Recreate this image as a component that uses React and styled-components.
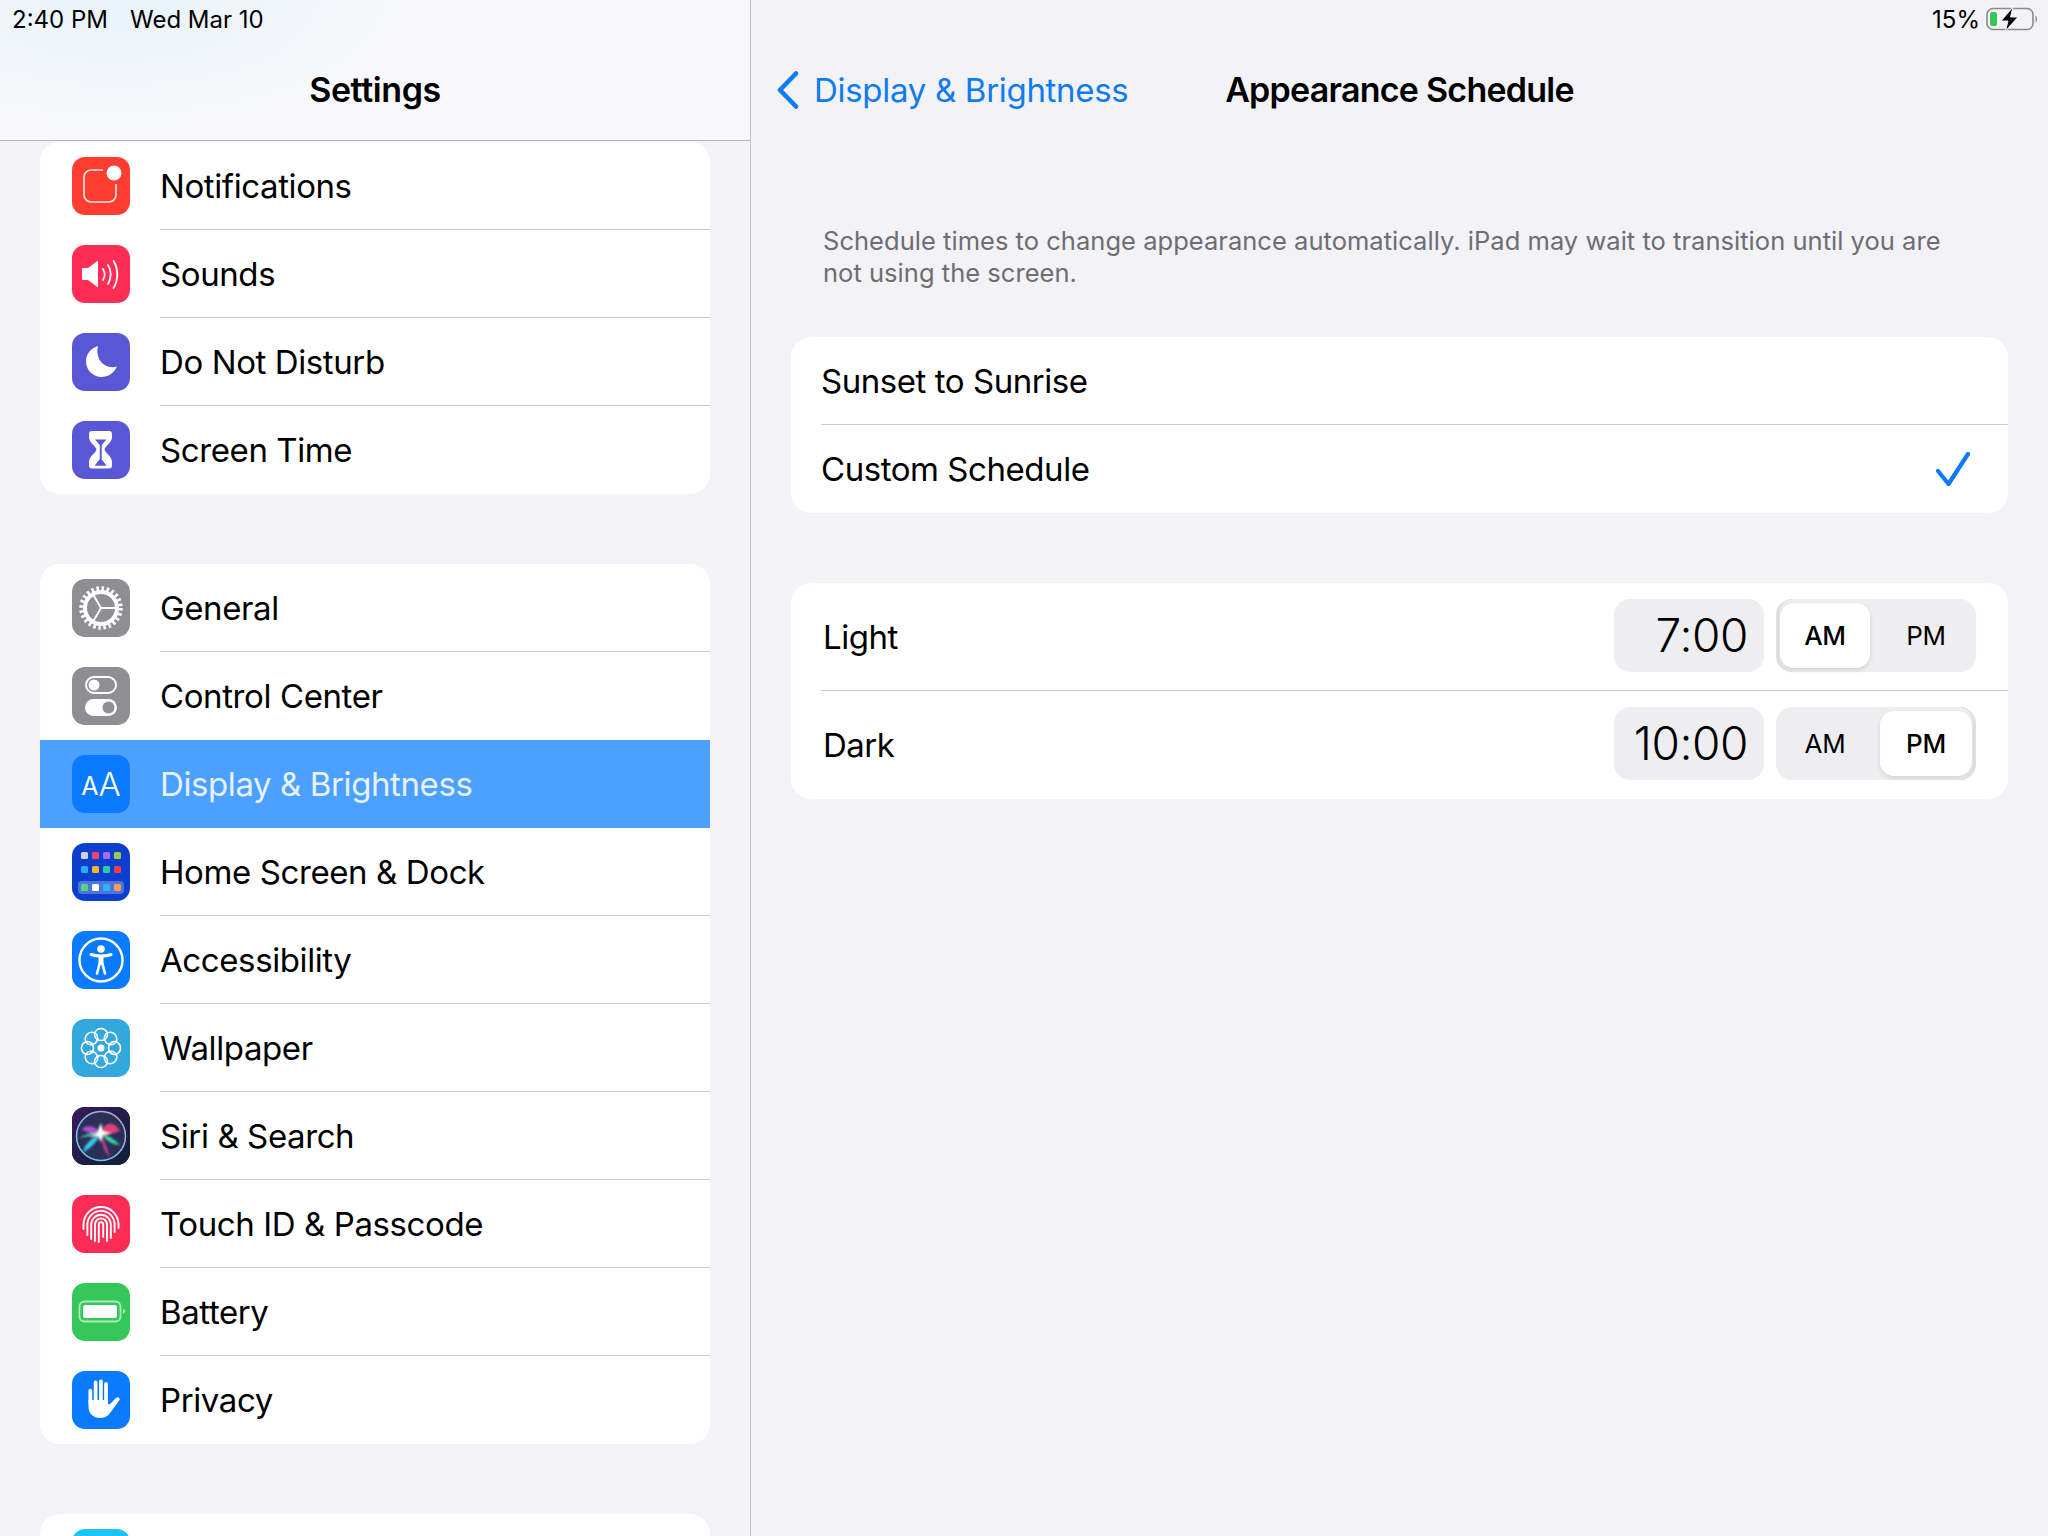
import React from 'react';
import styled, { createGlobalStyle } from 'styled-components';

const GlobalStyle = createGlobalStyle`
	html, body { margin: 0; padding: 0; }
	body {
		background: #f2f2f7;
		font-family: Inter, "Liberation Sans", sans-serif;
		color: #000;
	}
`;

const Root = styled.div`
	width: 2048px;
	height: 1536px;
	display: grid;
	grid-template-columns: 751px 1fr;
	overflow: hidden;
	background: #f2f2f7;
`;

const Sidebar = styled.aside`
	border-right: 1px solid #c5c5c9;
	height: 1536px;
	overflow: hidden;
`;

const SideHeader = styled.header`
	height: 140px;
	border-bottom: 1px solid #b4b4b8;
	background:
		radial-gradient(ellipse 300px 130px at 120px 0, #e9f3fb 0%, rgba(233, 243, 251, 0) 100%),
		#f8f8fa;
`;

const StatusBar = styled.div`
	height: 38px;
	display: flex;
	align-items: center;
	justify-content: ${(p) => (p.$right ? 'flex-end' : 'flex-start')};
	gap: ${(p) => (p.$right ? '6px' : '22px')};
	padding: ${(p) => (p.$right ? '0 8px 0 0' : '0 0 0 12px')};
	font-size: 24px;
`;

const SideTitle = styled.h1`
	margin: 32px 0 0;
	height: 40px;
	line-height: 40px;
	text-align: center;
	font-size: 34px;
	font-weight: 600;
	letter-spacing: -0.4px;
`;

const SideList = styled.div`
	padding: 1px 40px 0;
`;

const Card = styled.section`
	background: #fff;
	border-radius: 20px;
	overflow: hidden;
	margin-bottom: 70px;
`;

const Row = styled.div`
	height: 88px;
	display: flex;
	align-items: center;
	padding-left: 32px;
	background: ${(p) => (p.$selected ? '#4ca0ff' : '#fff')};
`;

const IconBox = styled.div`
	width: 58px;
	height: 58px;
	flex: none;
	border-radius: 13px;
	overflow: hidden;
	background: ${(p) => p.$bg};
	display: flex;
	align-items: center;
	justify-content: center;
	color: #fff;
	svg { display: block; }
`;

const RowBody = styled.div`
	flex: 1;
	height: 88px;
	margin-left: 30px;
	box-sizing: border-box;
	display: flex;
	align-items: center;
	border-bottom: 1px solid ${(p) => (p.$plain ? 'transparent' : '#c8c8cc')};
	font-size: 33px;
	letter-spacing: -0.4px;
	color: ${(p) => (p.$selected ? '#e6f2ff' : '#000')};
`;

const SmallA = styled.span`
	font-size: 25px;
	font-weight: 400;
	line-height: 1;
	margin-top: 4px;
`;

const BigA = styled.span`
	font-size: 33px;
	font-weight: 300;
	line-height: 1;
`;

const Detail = styled.main`
	height: 1536px;
	overflow: hidden;
`;

const DetailHeader = styled.header`
	height: 140px;
`;

const NavBar = styled.div`
	margin-top: 32px;
	height: 40px;
	display: grid;
	grid-template-columns: 1fr auto 1fr;
	align-items: center;
`;

const BackLink = styled.a`
	display: flex;
	align-items: center;
	gap: 14px;
	padding-left: 25px;
	color: #0f7bf0;
	font-size: 33px;
	letter-spacing: -0.3px;
	white-space: nowrap;
`;

const DetailTitle = styled.h2`
	margin: 0;
	font-size: 34px;
	line-height: 40px;
	font-weight: 600;
	letter-spacing: -0.75px;
`;

const DetailBody = styled.div`
	padding: 0 40px;
`;

const Note = styled.p`
	margin: 85px 0 48px;
	padding: 0 30px 0 32px;
	font-size: 25.5px;
	line-height: 32px;
	color: #6d6d72;
	letter-spacing: 0.03px;
`;

const OptionRow = styled.div`
	height: 88px;
	display: flex;
	align-items: center;
	justify-content: space-between;
	padding-left: 30px;
	font-size: 33px;
	letter-spacing: -0.45px;
`;

const OptionBody = styled.div`
	flex: 1;
	height: 88px;
	box-sizing: border-box;
	display: flex;
	align-items: center;
	justify-content: space-between;
	padding-right: 38px;
	border-bottom: 1px solid ${(p) => (p.$plain ? 'transparent' : '#c8c8cc')};
`;

const TimeRow = styled.div`
	height: 108px;
	box-sizing: border-box;
	margin-left: 30px;
	padding: 0 32px 3px 0;
	display: flex;
	align-items: center;
	gap: 12px;
	font-size: 33px;
	letter-spacing: -0.5px;
	border-bottom: 1px solid ${(p) => (p.$plain ? 'transparent' : '#c8c8cc')};
`;

const TimeLabel = styled.span`
	flex: 1;
	margin-top: 3px;
	padding-left: 2px;
`;

const TimeValue = styled.div`
	width: 150px;
	height: 73px;
	box-sizing: border-box;
	padding-right: 16px;
	border-radius: 16px;
	background: #eeeef0;
	font-size: 46px;
	letter-spacing: -0.4px;
	font-weight: 300;
	display: flex;
	align-items: center;
	justify-content: flex-end;
`;

const Segment = styled.div`
	width: 200px;
	height: 73px;
	box-sizing: border-box;
	padding: 4px;
	border-radius: 16px;
	background: #eeeef0;
	display: grid;
	grid-template-columns: 90px 92px;
	gap: 10px;
	box-shadow: inset ${(p) => (p.$pm ? '-3px' : '3px')} 0 0 #e2e2e4;
`;

const SegmentItem = styled.div`
	border-radius: 14px;
	display: flex;
	align-items: center;
	justify-content: center;
	font-size: 26px;
	letter-spacing: -0.3px;
	font-weight: ${(p) => (p.$active ? 450 : 400)};
	background: ${(p) => (p.$active ? '#fff' : 'transparent')};
	box-shadow: ${(p) => (p.$active ? '0 2px 5px rgba(0, 0, 0, 0.12)' : 'none')};
`;

const NotifIcon = () => (
	<svg width="58" height="58" viewBox="0 0 58 58" fill="none">
		<path d="M31 13H19a7 7 0 0 0-7 7v18a7 7 0 0 0 7 7h18a7 7 0 0 0 7-7V27" stroke="#fff" strokeOpacity="0.85" strokeWidth="1.7" />
		<circle cx="42" cy="16" r="7.5" fill="#fff" />
	</svg>
);

const SoundIcon = () => (
	<svg width="58" height="58" viewBox="0 0 58 58" fill="none">
		<path d="M10 23h6l10-7.5v27L16 35h-6z" fill="#fff" />
		<g stroke="#fff" strokeWidth="1.8" strokeLinecap="round">
			<path d="M31 24c2 3.2 2 7.8 0 11" />
			<path d="M36 20c3.6 5.4 3.6 13.2 0 19" />
			<path d="M41.5 16c5 7.5 5 19.5 0 27" />
		</g>
	</svg>
);

const MoonIcon = () => (
	<svg width="58" height="58" viewBox="0 0 58 58">
		<path d="M26 13C19 15 14 21 14 28.5 14 37 21 44 29.5 44 36 44 42 40 45 33.5 34 37 22.5 27 26 13z" fill="#fff" />
	</svg>
);

const HourglassIcon = () => (
	<svg width="58" height="58" viewBox="0 0 58 58">
		<path d="M20 10h17a3 3 0 0 1 3 3v3c0 6-7 9-7.5 12.5C33 32 40 35 40 41v3.500a3 3 0 0 1-3 3H20a3 3 0 0 1-3-3V41c0-6 7-9 7.500-12.500C24 25 17 22 17 16v-3a3 3 0 0 1 3-3z" fill="#fff" />
		<path d="M23 18.500h11.500L29.700 24v14h-1.900V24z" fill="#5a57d6" />
		<path d="M28.700 36.500c1 3 4 5 5.800 8.200H22.700c1.800-3.200 5-5.200 6-8.200z" fill="#5a57d6" />
	</svg>
);

const GearIcon = () => (
	<svg width="58" height="58" viewBox="0 0 58 58" fill="none" stroke="#fff">
		<circle cx="29" cy="29" r="19.5" strokeWidth="4.5" strokeDasharray="2.55 2.55" />
		<circle cx="29" cy="29" r="16" strokeWidth="4" />
		<path d="M29 29H43.500M29 29L21.700 16.500M29 29L21.700 41.500" strokeWidth="2" />
	</svg>
);

const ToggleIcon = () => (
	<svg width="58" height="58" viewBox="0 0 58 58" fill="none">
		<rect x="14" y="10" width="30" height="16" rx="8" stroke="#fff" strokeWidth="2" />
		<circle cx="22" cy="18" r="5.5" fill="#fff" />
		<rect x="13" y="32" width="32" height="17" rx="8.5" fill="#fff" />
		<circle cx="36.5" cy="40.5" r="6" fill="#8e8e93" />
	</svg>
);

const homeDots = [
	['#cfd4dc', '#f0456b', '#a56bf5', '#9ccc45'],
	['#22b0f5', '#f5b31c', '#23cfa3', '#f23d4d'],
	['#55d977', '#ffffff', '#22b8f5', '#f5a14c'],
];

const HomeIcon = () => (
	<svg width="58" height="58" viewBox="0 0 58 58">
		<rect x="6" y="38" width="46" height="13" rx="4" fill="#fff" fillOpacity="0.28" />
		{homeDots.map((row, r) =>
			row.map((c, i) => (
				<rect key={`${r}-${i}`} x={9 + i * 11} y={[9, 23, 41][r]} width="7" height="7" rx="1.5" fill={c} />
			)),
		)}
	</svg>
);

const AccessIcon = () => (
	<svg width="58" height="58" viewBox="0 0 58 58" fill="none" stroke="#fff" strokeLinecap="round">
		<circle cx="29" cy="29" r="21.5" strokeWidth="2.4" />
		<circle cx="29" cy="18" r="3.8" fill="#fff" stroke="none" />
		<path d="M19 23.500C24 25.500 34 25.500 39 23.500" strokeWidth="3" />
		<path d="M29 25v9" strokeWidth="5" strokeLinecap="butt" />
		<path d="M27.500 33l-2.500 9.500M30.500 33l2.500 9.500" strokeWidth="2.6" />
	</svg>
);

const petals = [0, 45, 90, 135, 180, 225, 270, 315];

const FlowerIcon = () => (
	<svg width="58" height="58" viewBox="0 0 58 58" fill="none" stroke="#fff" strokeWidth="1.6">
		{petals.map((a) => (
			<ellipse key={a} cx="29" cy="15.5" rx="6.5" ry="6" transform={`rotate(${a} 29 29)`} />
		))}
		<circle cx="29" cy="29" r="3.5" fill="#fff" stroke="none" />
	</svg>
);

const SiriIcon = () => (
	<svg width="58" height="58" viewBox="0 0 58 58" fill="none">
		<defs>
			<linearGradient id="siriBg" x1="0" y1="0" x2="1" y2="1">
				<stop offset="0" stopColor="#3a1a5c" />
				<stop offset="1" stopColor="#0f1f3a" />
			</linearGradient>
			<linearGradient id="siriRing" x1="0" y1="1" x2="1" y2="0">
				<stop offset="0" stopColor="#5fd6e8" />
				<stop offset="1" stopColor="#b9a8cc" />
			</linearGradient>
			<filter id="siriSoft" x="-20%" y="-20%" width="140%" height="140%">
				<feGaussianBlur stdDeviation="0.9" />
			</filter>
		</defs>
		<rect width="58" height="58" fill="url(#siriBg)" />
		<circle cx="29" cy="29" r="24.5" fill="#2b2f58" stroke="url(#siriRing)" strokeWidth="1.5" />
		<g filter="url(#siriSoft)">
			<path d="M29 26C22 18 15 18 10 22 15 26 22 28 29 26z" fill="#b24fd0" />
			<path d="M29 26C33 14 42 14 48 24 41 27 35 28 29 26z" fill="#e0407a" />
			<path d="M29 26C36 28 42 32 48 38 41 38 34 34 29 26z" fill="#3fd8a0" />
			<path d="M29 26C26 34 18 42 11 45 12 38 20 30 29 26z" fill="#35c8ea" />
			<path d="M29 26C32 34 35 42 38 50 33 46 29 36 29 26z" fill="#e0408c" />
			<path d="M29 26C22 28 14 30 7 31 14 27 22 25 29 26z" fill="#3fd8a0" />
		</g>
		<path d="M29 16l2 8 9 2-9 2-2 7-3-6-9 1 8-4z" fill="#fff" filter="url(#siriSoft)" />
	</svg>
);

const fingerArches = [
	{ r: 17.5, left: 34, right: 33 },
	{ r: 13.6, left: 40, right: 37 },
	{ r: 9.8, left: 44, right: 43 },
	{ r: 6, left: 46, right: 46 },
	{ r: 2.2, left: 47, right: 42 },
];

const TouchIcon = () => (
	<svg width="58" height="58" viewBox="0 0 58 58" fill="none" stroke="#fff" strokeWidth="1.9" strokeLinecap="round">
		{fingerArches.map(({ r, left, right }) => (
			<path key={r} d={`M${29 - r} ${left} V29.5 A${r} ${r} 0 0 1 ${29 + r} 29.5 V${right}`} />
		))}
	</svg>
);

const BatteryIcon = () => (
	<svg width="58" height="58" viewBox="0 0 58 58" fill="none">
		<rect x="7.5" y="18.5" width="41" height="20" rx="5" stroke="#fff" strokeOpacity="0.6" strokeWidth="1.8" />
		<rect x="11" y="22" width="34" height="13" rx="2.5" fill="#fff" />
		<path d="M51 25.500l2.500 2.500-2.500 3z" fill="#fff" fillOpacity="0.7" />
	</svg>
);

const HandIcon = () => (
	<svg width="58" height="58" viewBox="0 0 58 58" fill="none">
		<path d="M16.500 29V36C16.500 43 22 47 28 47 34 47 37 44 39.500 40L47.500 29C48.500 27 46 25 44 27L38 33C36.500 34 35.800 33 35.800 31V29z" fill="#fff" />
		<path d="M18.300 19.500V32M23.600 11.300V31M28.900 10.300V31M34 12.800V32" stroke="#fff" strokeWidth="3.700" strokeLinecap="round" />
	</svg>
);

const Chevron = () => (
	<svg width="24" height="38" viewBox="0 0 24 38" fill="none">
		<path d="M20 2.500L4 19l16 16.500" stroke="#0f7bf0" strokeWidth="4.6" strokeLinecap="round" strokeLinejoin="round" />
	</svg>
);

const Check = () => (
	<svg width="34" height="34" viewBox="0 0 34 34" fill="none">
		<path d="M2 19l10.500 13L32 2" stroke="#0a7aff" strokeWidth="4.2" strokeLinecap="round" strokeLinejoin="round" />
	</svg>
);

const StatusBattery = () => (
	<svg width="54" height="24" viewBox="0 0 54 24" fill="none">
		<rect x="1" y="1.500" width="46" height="21" rx="6" stroke="#8a8a8e" strokeWidth="1.6" />
		<rect x="4" y="5" width="7" height="14" rx="2.5" fill="#35c759" />
		<path d="M49.500 8.500c2 1 2 6 0 7z" fill="#8a8a8e" />
		<path d="M27 0L15 14h7l-2.500 10L32 10h-7.500z" fill="#000" stroke="#f4f4f8" strokeWidth="1" />
	</svg>
);

const groupOne = [
	{ label: 'Notifications', bg: '#fe3d30', icon: <NotifIcon /> },
	{ label: 'Sounds', bg: '#fd2d55', icon: <SoundIcon /> },
	{ label: 'Do Not Disturb', bg: '#5a57d6', icon: <MoonIcon /> },
	{ label: 'Screen Time', bg: '#5a57d6', icon: <HourglassIcon />, plain: true },
];

const groupTwo = [
	{ label: 'General', bg: '#8e8e93', icon: <GearIcon /> },
	{ label: 'Control Center', bg: '#8e8e93', icon: <ToggleIcon />, plain: true },
	{
		label: 'Display & Brightness',
		bg: '#0a7aff',
		selected: true,
		plain: true,
		icon: (
			<>
				<SmallA>A</SmallA>
				<BigA>A</BigA>
			</>
		),
	},
	{ label: 'Home Screen & Dock', bg: '#0d3fcf', icon: <HomeIcon /> },
	{ label: 'Accessibility', bg: '#0a7aff', icon: <AccessIcon /> },
	{ label: 'Wallpaper', bg: '#33a8dc', icon: <FlowerIcon /> },
	{ label: 'Siri & Search', bg: '#1a1a3a', icon: <SiriIcon /> },
	{ label: 'Touch ID & Passcode', bg: '#fb2c56', icon: <TouchIcon /> },
	{ label: 'Battery', bg: '#35c759', icon: <BatteryIcon /> },
	{ label: 'Privacy', bg: '#0a7aff', icon: <HandIcon />, plain: true },
];

function SettingsRow({ item }) {
	return (
		<Row $selected={item.selected}>
			<IconBox $bg={item.bg}>{item.icon}</IconBox>
			<RowBody $plain={item.plain} $selected={item.selected}>{item.label}</RowBody>
		</Row>
	);
}

function TimeSetting({ label, time, pm, plain }) {
	return (
		<TimeRow $plain={plain}>
			<TimeLabel>{label}</TimeLabel>
			<TimeValue>{time}</TimeValue>
			<Segment $pm={pm}>
				<SegmentItem $active={!pm}>AM</SegmentItem>
				<SegmentItem $active={pm}>PM</SegmentItem>
			</Segment>
		</TimeRow>
	);
}

export default function App() {
	return (
		<Root>
			<GlobalStyle />
			<Sidebar>
				<SideHeader>
					<StatusBar>
						<span>2:40 PM</span>
						<span>Wed Mar 10</span>
					</StatusBar>
					<SideTitle>Settings</SideTitle>
				</SideHeader>
				<SideList>
					<Card>
						{groupOne.map((item) => (
							<SettingsRow key={item.label} item={item} />
						))}
					</Card>
					<Card>
						{groupTwo.map((item) => (
							<SettingsRow key={item.label} item={item} />
						))}
					</Card>
					<Card>
						<Row>
							<IconBox $bg="#1cc4f7" />
						</Row>
					</Card>
				</SideList>
			</Sidebar>
			<Detail>
				<DetailHeader>
					<StatusBar $right>
						<span>15%</span>
						<StatusBattery />
					</StatusBar>
					<NavBar>
						<BackLink>
							<Chevron />
							Display & Brightness
						</BackLink>
						<DetailTitle>Appearance Schedule</DetailTitle>
						<span />
					</NavBar>
				</DetailHeader>
				<DetailBody>
					<Note>
						Schedule times to change appearance automatically. iPad may wait to transition until you are not using the screen.
					</Note>
					<Card>
						<OptionRow>
							<OptionBody>Sunset to Sunrise</OptionBody>
						</OptionRow>
						<OptionRow>
							<OptionBody $plain>
								Custom Schedule
								<Check />
							</OptionBody>
						</OptionRow>
					</Card>
					<Card>
						<TimeSetting label="Light" time="7:00" />
						<TimeSetting label="Dark" time="10:00" pm plain />
					</Card>
				</DetailBody>
			</Detail>
		</Root>
	);
}
